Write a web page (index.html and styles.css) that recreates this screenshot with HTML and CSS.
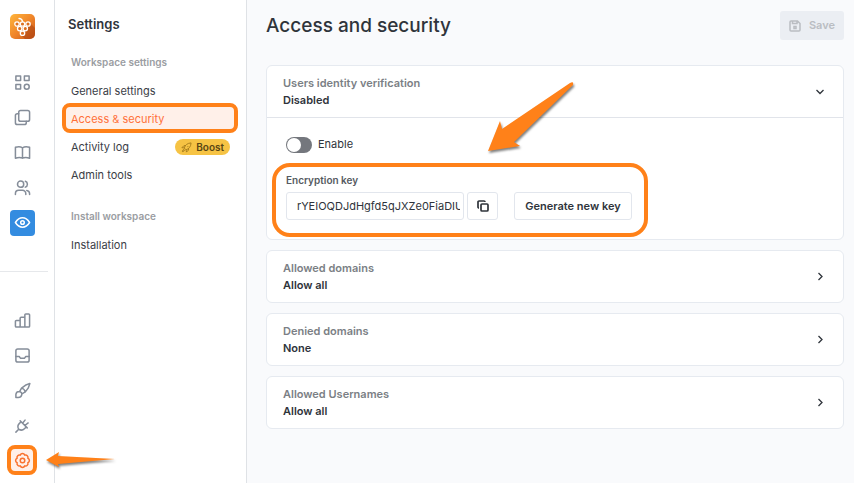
FILE: index.html
```html
<!DOCTYPE html>
<html lang="en">
<head>
<meta charset="utf-8">
<meta name="viewport" content="width=device-width, initial-scale=1">
<title>Access and security</title>
<link rel="stylesheet" href="styles.css">
</head>
<body>
<div class="app">
  <nav class="rail" aria-label="Main">
    <a class="logo" href="#" aria-label="Home">
      <svg viewBox="0 0 25 25" width="25" height="25">
        <defs><linearGradient id="lg" x1="0" y1="0" x2="1" y2="1"><stop offset="0" stop-color="#ffb63c"/><stop offset=".5" stop-color="#f0862a"/><stop offset="1" stop-color="#c9541a"/></linearGradient></defs>
        <rect width="25" height="25" rx="5" fill="url(#lg)"/>
        <path d="M20 9l5 5v6a5 5 0 0 1-5 5h-5l-4-4z" fill="#a83f0e" opacity=".5"/>
        <g fill="#dc6f20" stroke="#fff" stroke-width="1.3"><circle cx="7" cy="10" r="2.2"/><circle cx="12.5" cy="10" r="2.2"/><circle cx="18" cy="10" r="2.2"/><circle cx="9.700" cy="14.600" r="2.200"/><circle cx="15.300" cy="14.600" r="2.200"/><circle cx="12.500" cy="19.200" r="2.200"/></g>
        <path d="M12.500 7.500Q12 4.500 9 4.500" fill="none" stroke="#fff" stroke-width="1.300" stroke-linecap="round"/>
      </svg>
    </a>
    <div class="rail-group">
      <a class="rail-item" href="#" aria-label="Dashboard"><svg class="icon" viewBox="0 0 18 18"><rect x="2" y="2" width="5" height="5"/><rect x="11" y="2" width="5" height="5"/><rect x="2" y="11" width="5" height="5"/><circle cx="13.5" cy="13.5" r="2.6"/></svg></a>
      <a class="rail-item" href="#" aria-label="Pages"><svg class="icon" viewBox="0 0 18 18"><rect x="5" y="1.500" width="11.500" height="11.500" rx="2"/><path d="M5 5H3.500a2 2 0 0 0-2 2v7.500a2 2 0 0 0 2 2H11a2 2 0 0 0 2-2V13"/></svg></a>
      <a class="rail-item" href="#" aria-label="Knowledge"><svg class="icon" viewBox="0 0 18 18"><path d="M9 4v11M9 4Q6 2 1.500 3.500V15Q6 13.500 9 15Q12 13.500 16.500 15V3.500Q12 2 9 4z"/></svg></a>
      <a class="rail-item" href="#" aria-label="Users"><svg class="icon" viewBox="0 0 18 18"><circle cx="7" cy="5.500" r="3.300"/><path d="M1.500 16.500v-1a3.500 3.500 0 0 1 3.500-3.500h4a3.500 3.500 0 0 1 3.500 3.500v1M12 2.400a3.300 3.300 0 0 1 0 6.200M13.500 12.200q3 .6 3 3.300v1"/></svg></a>
      <a class="rail-item" href="#" aria-label="Preview"><span class="tile"><svg class="icon" viewBox="0 0 18 18"><path d="M1.500 9Q4.700 4 9 4t7.500 5Q13.300 14 9 14T1.500 9z"/><circle cx="9" cy="9" r="1.900"/></svg></span></a>
    </div>
    <hr class="rail-line">
    <div class="rail-group">
      <a class="rail-item" href="#" aria-label="Analytics"><svg class="icon" viewBox="0 0 18 18"><path d="M1.500 10a1 1 0 0 1 1-1h4v7h-4a1 1 0 0 1-1-1zM6.500 16V6.500a1 1 0 0 1 1-1h4V16zM11.500 16V3a1 1 0 0 1 1-1H15.500a1 1 0 0 1 1 1v12a1 1 0 0 1-1 1z"/></svg></a>
      <a class="rail-item" href="#" aria-label="Inbox"><svg class="icon" viewBox="0 0 18 18"><rect x="2" y="2" width="14" height="14" rx="2"/><path d="M2 10h3.500l1.500 2h4l1.500-2H16"/></svg></a>
      <a class="rail-item" href="#" aria-label="Appearance"><svg class="icon" viewBox="0 0 18 18"><path d="M2 16.500v-3.500q.5-3 3.500-3a3 3 0 0 1 2.700 3.600Q7.500 16.500 4.500 16.500zM6 10l2-3.500L12 3.500l4.800-2L15 6.500 12 10.500l-3.600 2M8 6.500q3 .7 4 4"/></svg></a>
      <a class="rail-item" href="#" aria-label="Integrations"><svg class="icon" viewBox="0 0 18 18"><path d="M2 16l3-3M5 13Q3 9.500 5.500 7L7.500 5l5.500 5.500-2 2Q8.500 15 5 13zM6.500 4l7.500 7.500M9 6.500l2.700-3.200M11.500 9l3.500-2.700"/></svg></a>
      <a class="rail-item current" href="#" aria-label="Settings"><svg class="icon" viewBox="0 0 18 18"><path d="M6.600 3.300a2.600 2.600 0 0 1 4.800 0 2.600 2.600 0 0 1 3.300 3.300 2.600 2.600 0 0 1 0 4.800 2.600 2.600 0 0 1-3.300 3.300 2.600 2.600 0 0 1-4.800 0 2.600 2.600 0 0 1-3.300-3.300 2.600 2.600 0 0 1 0-4.800 2.600 2.600 0 0 1 3.300-3.300z"/><circle cx="9" cy="9" r="2.400"/></svg></a>
    </div>
  </nav>

  <aside class="sidebar">
    <h2 class="sidebar-title">Settings</h2>
    <h3 class="section-label">Workspace settings</h3>
    <ul class="menu">
      <li><a href="#">General settings</a></li>
      <li><a class="selected" href="#">Access &amp; security</a></li>
      <li><a href="#">Activity log <span class="boost"><svg class="boost-icon" viewBox="0 0 12 12"><path d="M3.500 6.500Q5 1.500 11 1q-.5 6-5.500 7.500zM3.500 6.500L1 6.200 3.200 4H5M5.500 8.500L6 11l2.200-2.300V7M3.500 8Q1.500 8.500 1.500 10.500 3.500 10.500 4 8.500M7 5h1"/></svg>Boost</span></a></li>
      <li><a href="#">Admin tools</a></li>
    </ul>
    <h3 class="section-label">Install workspace</h3>
    <ul class="menu">
      <li><a href="#">Installation</a></li>
    </ul>
  </aside>

  <main class="main">
    <header class="page-head">
      <h1>Access and security</h1>
      <button class="save" type="button" disabled><svg viewBox="0 0 12 12" width="12" height="12"><path d="M1 2a1 1 0 0 1 1-1h6.500L11 3.500V10a1 1 0 0 1-1 1H2a1 1 0 0 1-1-1zM3.500 1.500v2h4.500v-2"/><rect x="5" y="6.500" width="2" height="2"/></svg>Save</button>
    </header>

    <section class="card">
      <button class="card-head" type="button" aria-expanded="true">
        <span class="card-text"><span class="card-name">Users identity verification</span><span class="card-value">Disabled</span></span>
        <svg class="chevron" viewBox="0 0 10 10"><path d="M1.500 3L5 6.500l3.500-3.500"/></svg>
      </button>
      <div class="card-body">
        <label class="toggle"><input type="checkbox" role="switch">Enable</label>
        <div class="key">
          <label class="key-label" for="key">Encryption key</label>
          <div class="key-row">
            <input class="key-input" id="key" type="text" value="rYEIOQDJdHgfd5qJXZe0FiaDIUk" readonly>
            <button class="btn copy" type="button" aria-label="Copy key"><svg viewBox="0 0 12 12" width="12" height="12"><rect x="4" y="4" width="7" height="7" rx="1"/><path d="M2 8a1 1 0 0 1-1-1V2a1 1 0 0 1 1-1h5a1 1 0 0 1 1 1"/></svg></button>
            <button class="btn generate" type="button">Generate new key</button>
          </div>
        </div>
      </div>
    </section>

    <section class="card">
      <button class="card-head" type="button" aria-expanded="false">
        <span class="card-text"><span class="card-name">Allowed domains</span><span class="card-value">Allow all</span></span>
        <svg class="chevron" viewBox="0 0 10 10"><path d="M3.500 1L7 4.500 3.500 8"/></svg>
      </button>
    </section>
    <section class="card">
      <button class="card-head" type="button" aria-expanded="false">
        <span class="card-text"><span class="card-name">Denied domains</span><span class="card-value">None</span></span>
        <svg class="chevron" viewBox="0 0 10 10"><path d="M3.500 1L7 4.500 3.500 8"/></svg>
      </button>
    </section>
    <section class="card">
      <button class="card-head" type="button" aria-expanded="false">
        <span class="card-text"><span class="card-name">Allowed Usernames</span><span class="card-value">Allow all</span></span>
        <svg class="chevron" viewBox="0 0 10 10"><path d="M3.500 1L7 4.500 3.500 8"/></svg>
      </button>
    </section>
  </main>
</div>
<svg class="pointer pointer-key" viewBox="0 0 90 74" aria-hidden="true"><path d="M2 70L14 40 16 48 84 2Q88 0 87 4L28 61 34 65z"/></svg>
<svg class="pointer pointer-settings" viewBox="0 0 72 22" aria-hidden="true"><path d="M0 11L13 3 12 7 69 10 12 15 13 18z"/></svg>
</body>
</html>
```
FILE: styles.css
```css
* { box-sizing: border-box; }

body {
  margin: 0;
  background: #f9fafc;
  color: #2f343b;
  font: 11px/17px Inter, "Open Sans", sans-serif;
}

a { color: inherit; text-decoration: none; }
button, input { font: inherit; color: inherit; margin: 0; }
svg { display: block; flex: none; fill: none; stroke: currentColor; }
h1, h2, h3, ul { margin: 0; padding: 0; }
ul { list-style: none; }

.app {
  display: grid;
  grid-template-columns: 55px 192px minmax(0, 1fr);
  min-height: 100vh;
}

/* Icon rail */
.rail {
  background: #fff;
  border-right: 1px solid #dfe2e6;
  padding-top: 14px;
}
.logo { display: block; margin: 0 0 26px 10px; }
.logo svg { stroke: none; }
.rail-group { width: 45px; }
.rail-item {
  display: grid;
  place-items: center;
  height: 35px;
  color: #858d99;
}
.icon {
  width: 17px;
  height: 17px;
  stroke-width: 1.6;
  stroke-linecap: round;
  stroke-linejoin: round;
}
.tile {
  display: grid;
  place-items: center;
  width: 25px;
  height: 26px;
  border-radius: 4px;
  background: #338ce0;
  color: #fff;
}
.rail-line {
  width: 48px;
  margin: 31px 0;
  border: 0;
  border-top: 1px solid #e6e8eb;
}
.current { position: relative; color: #f9722e; }
.current .icon { position: relative; }
.current::before {
  content: "";
  position: absolute;
  inset: 2px 8px 3px 7px;
  border: 4px solid #ff8119;
  border-radius: 8px;
  background: #fff0e9;
}

/* Settings menu */
.sidebar {
  background: #fff;
  border-right: 1px solid #dfe2e6;
  padding: 16px 8px;
}
.sidebar-title {
  margin: 0 0 21px 5px;
  font-size: 13px;
  font-weight: 600;
}
.section-label {
  padding-left: 8px;
  margin-bottom: 6px;
  color: #9a9da2;
  font-size: 10px;
  font-weight: 600;
}
.menu + .section-label { margin-top: 19px; }
.menu a {
  position: relative;
  display: flex;
  align-items: center;
  justify-content: space-between;
  height: 28px;
  padding: 0 8px;
  color: #3b4047;
}
.menu .selected { border-radius: 8px; color: #ff703a; background: #fff0e9; }
.selected::after {
  content: "";
  position: absolute;
  inset: -2px 0 0 -1px;
  border: 4px solid #ff8119;
  border-radius: 8px;
}
.boost {
  display: flex;
  align-items: center;
  gap: 4px;
  height: 16px;
  padding: 0 6px;
  border-radius: 8px;
  background: #f6c344;
  color: #5b4714;
  font-size: 10px;
  font-weight: 600;
}
.boost-icon { width: 11px; height: 11px; color: #a37b1b; }

/* Page */
.main { padding: 11px 10px 20px 19px; }
.page-head {
  display: flex;
  align-items: center;
  justify-content: space-between;
  margin-bottom: 25px;
}
h1 { font-size: 19px; line-height: 29px; font-weight: 500; }
.save {
  display: flex;
  align-items: center;
  gap: 8px;
  height: 29px;
  padding: 0 9px;
  border: 0;
  border-radius: 3px;
  background: #ebeef3;
  color: #babdc2;
  font-weight: 600;
}
.save svg { stroke-width: 1.5; }
.card {
  margin-bottom: 10px;
  border: 1px solid #e6eaf0;
  border-radius: 6px;
  background: #fff;
}
.card-head {
  display: flex;
  align-items: center;
  justify-content: space-between;
  width: 100%;
  height: 51px;
  padding: 0 18px 0 16px;
  border: 0;
  background: none;
  text-align: left;
}
.card-text { display: grid; font-weight: 600; }
.card-name { color: #7b7f85; }
.chevron { width: 10px; height: 10px; stroke-width: 1.3; }
.card-body {
  border-top: 1px solid #e1e4ea;
  padding: 18px 19px 19px;
}
.toggle { display: flex; align-items: center; gap: 6px; width: max-content; }
.toggle input {
  appearance: none;
  width: 26px;
  height: 16px;
  padding: 1px;
  border-radius: 8px;
  background: #74777d;
}
.toggle input::before {
  content: "";
  display: block;
  width: 14px;
  height: 14px;
  border-radius: 50%;
  background: #fff;
}
.toggle input:checked::before { margin-left: auto; }
.key { position: relative; width: max-content; margin-top: 19px; }
.key::after {
  content: "";
  position: absolute;
  inset: -9px -16px -17px -14px;
  border: 4px solid #ff8119;
  border-radius: 18px;
  pointer-events: none;
}
.key-label { display: block; margin-bottom: 3px; color: #555a61; font-size: 10px; font-weight: 600; }
.key-row { display: flex; }
.key-input, .btn {
  height: 28px;
  border: 1px solid #e2e6ed;
  border-radius: 3px;
  background: #fff;
}
.key-input { width: 178px; padding: 0 3px 0 10px; }
.copy { display: grid; place-items: center; width: 31px; margin: 0 16px 0 3px; padding: 0; }
.copy svg { stroke-width: 1.7; }
.generate { width: 118px; padding: 0; font-weight: 600; white-space: nowrap; }

/* Callout arrows lying over the page */
.pointer { position: absolute; fill: #ff8119; stroke: none; filter: drop-shadow(1px 2px 1px rgb(0 0 0 / 50%)); }
.pointer-key { left: 486px; top: 81px; width: 90px; height: 74px; }
.pointer-settings { left: 46px; top: 449px; width: 72px; height: 22px; }
```
